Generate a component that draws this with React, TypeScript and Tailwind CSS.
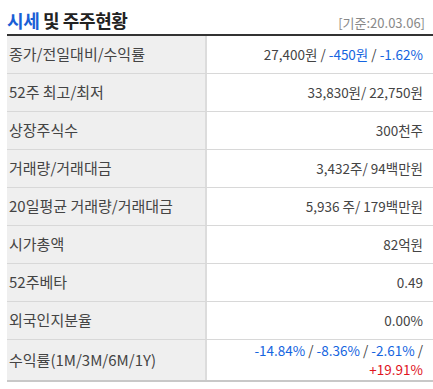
import React from "react";

type Part = { text: string; color?: "blue" | "red" };

interface Row {
  label: string;
  value: Part[];
}

const ROWS: Row[] = [
  {
    label: "종가/전일대비/수익률",
    value: [
      { text: "27,400원 / " },
      { text: "-450원", color: "blue" },
      { text: " / " },
      { text: "-1.62%", color: "blue" },
    ],
  },
  { label: "52주 최고/최저", value: [{ text: "33,830원/ 22,750원" }] },
  { label: "상장주식수", value: [{ text: "300천주" }] },
  { label: "거래량/거래대금", value: [{ text: "3,432주/ 94백만원" }] },
  { label: "20일평균 거래량/거래대금", value: [{ text: "5,936 주/ 179백만원" }] },
  { label: "시가총액", value: [{ text: "82억원" }] },
  { label: "52주베타", value: [{ text: "0.49" }] },
  { label: "외국인지분율", value: [{ text: "0.00%" }] },
];

const colorClass = (c?: "blue" | "red") =>
  c === "blue" ? "text-[#1565e0]" : c === "red" ? "text-[#e0141e]" : "";

export default function App() {
  return (
    <div
      className="w-[433px] h-[389px] bg-white overflow-hidden"
      style={{ fontFamily: '"Noto Sans CJK KR", "Noto Sans", sans-serif' }}
    >
      {/* Header */}
      <div className="flex items-end justify-between pl-[7px] pr-[8px] h-[34px] pb-[5px]">
        <h2 className="text-[18px] font-bold leading-none tracking-[-0.4px] text-[#222]">
          <span className="text-[#1a5fd6]">시세</span> 및 주주현황
        </h2>
        <span className="text-[13px] leading-none text-[#888]">[기준:20.03.06]</span>
      </div>

      {/* Table */}
      <div className="ml-[7px] border-t-2 border-[#333] border-b-2 border-b-[#c8c8c8]">
        {ROWS.map((row) => (
          <div key={row.label} className="flex h-[38px] border-b border-[#d8d8d8]">
            <div className="w-[200px] shrink-0 bg-[#efefef] border-r-2 border-[#dcdcdc] flex items-center pl-[2px] text-[15px] text-[#444]">
              {row.label}
            </div>
            <div className="flex-1 flex items-center justify-end pr-[10px] text-[13.5px] text-[#444]">
              {row.value.map((p, i) => (
                <span key={i} className={`whitespace-pre ${colorClass(p.color)}`}>
                  {p.text}
                </span>
              ))}
            </div>
          </div>
        ))}
        <div className="flex h-[40px]">
          <div className="w-[200px] shrink-0 bg-[#efefef] border-r-2 border-[#dcdcdc] flex items-center pl-[2px] text-[15px] text-[#444]">
            수익률(1M/3M/6M/1Y)
          </div>
          <div className="flex-1 flex flex-col items-end justify-center pr-[10px] text-[13.5px] leading-[19px] text-[#444]">
            <div className="whitespace-pre">
              <span className="text-[#1565e0]">-14.84%</span> / <span className="text-[#1565e0]">-8.36%</span> /{" "}
              <span className="text-[#1565e0]">-2.61%</span> /
            </div>
            <div className="text-[#e0141e]">+19.91%</div>
          </div>
        </div>
      </div>
    </div>
  );
}
